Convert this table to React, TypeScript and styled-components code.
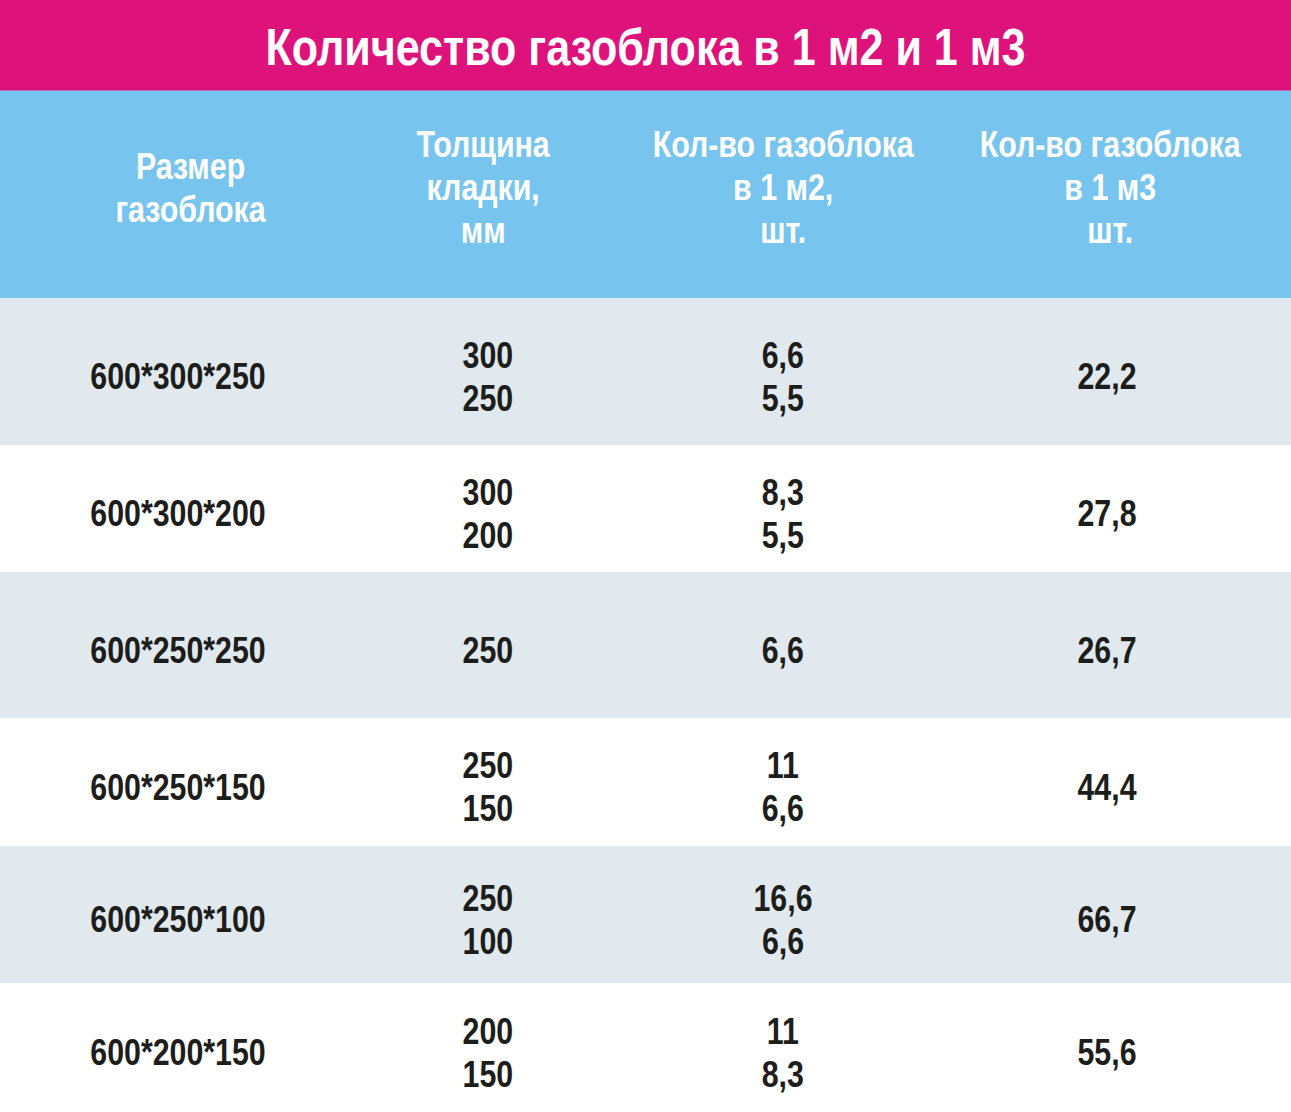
import React from "react";
import styled, { createGlobalStyle } from "styled-components";

const GlobalStyle = createGlobalStyle`
  html, body {
    margin: 0;
    padding: 0;
    background: #ffffff;
  }
  body {
    font-family: "Liberation Sans", Arial, sans-serif;
    font-weight: 700;
  }
`;

const rows = [
  { size: "600*300*250", thick: ["300", "250"], m2: ["6,6", "5,5"], m3: "22,2", h: 147, shaded: true },
  { size: "600*300*200", thick: ["300", "200"], m2: ["8,3", "5,5"], m3: "27,8", h: 127, shaded: false },
  { size: "600*250*250", thick: ["250"], m2: ["6,6"], m3: "26,7", h: 146, shaded: true },
  { size: "600*250*150", thick: ["250", "150"], m2: ["11", "6,6"], m3: "44,4", h: 128, shaded: false },
  { size: "600*250*100", thick: ["250", "100"], m2: ["16,6", "6,6"], m3: "66,7", h: 137, shaded: true },
  { size: "600*200*150", thick: ["200", "150"], m2: ["11", "8,3"], m3: "55,6", h: 129, shaded: false },
];

export default function App() {
  return (
    <>
      <GlobalStyle />
      <Table>
        <TitleBar>
          <Narrow>Количество газоблока в 1 м2 и 1 м3</Narrow>
        </TitleBar>
        <HeaderRow>
          <HeadCell $shift={26}>
            <Narrow>
              Размер
              <br />
              газоблока
            </Narrow>
          </HeadCell>
          <HeadCell $shift={-10}>
            <Narrow>
              Толщина
              <br />
              кладки,
              <br />
              мм
            </Narrow>
          </HeadCell>
          <HeadCell>
            <Narrow>
              Кол-во газоблока
              <br />в 1 м2,
              <br />
              шт.
            </Narrow>
          </HeadCell>
          <HeadCell $shift={-16}>
            <Narrow>
              Кол-во газоблока
              <br />в 1 м3
              <br />
              шт.
            </Narrow>
          </HeadCell>
        </HeaderRow>
        {rows.map((r) => (
          <BodyRow key={r.size} $shaded={r.shaded} $height={r.h}>
            <Cell>
              <Narrow>{r.size}</Narrow>
            </Cell>
            <Cell>
              <Narrow>
                {r.thick.map((t) => (
                  <Line key={t}>{t}</Line>
                ))}
              </Narrow>
            </Cell>
            <Cell>
              <Narrow>
                {r.m2.map((t) => (
                  <Line key={t}>{t}</Line>
                ))}
              </Narrow>
            </Cell>
            <Cell $shift={-22}>
              <Narrow>{r.m3}</Narrow>
            </Cell>
          </BodyRow>
        ))}
      </Table>
    </>
  );
}

const Table = styled.div`
  width: 1291px;
  display: flex;
  flex-direction: column;
`;

// Arial Narrow is not installed: squeeze Liberation Sans to its width
const Narrow = styled.span`
  display: inline-block;
  transform: scaleX(0.82);
  white-space: nowrap;
`;

const TitleBar = styled.div`
  height: 90px;
  background: #dd137b;
  color: #ffffff;
  font-size: 52.5px;
  display: flex;
  align-items: center;
  justify-content: center;
  padding-top: 2px;
  box-sizing: border-box;
`;

const Columns = styled.div`
  display: grid;
  grid-template-columns: 356px 264px 326px 1fr;
`;

const HeaderRow = styled(Columns)`
  height: 208px;
  background: #77c4ef;
  color: #ffffff;
  border-top: 1px solid #b766b8;
  box-sizing: border-box;
`;

const HeadCell = styled.div<{ $shift?: number }>`
  display: flex;
  flex-direction: column;
  align-items: center;
  justify-content: center;
  text-align: center;
  font-size: 37px;
  line-height: 43px;
  padding-bottom: 14px;
  padding-left: ${(p) => Math.max(p.$shift ?? 0, 0)}px;
  padding-right: ${(p) => Math.max(-(p.$shift ?? 0), 0)}px;
`;

const BodyRow = styled(Columns)<{ $shaded: boolean; $height: number }>`
  height: ${(p) => p.$height}px;
  background: ${(p) => (p.$shaded ? "#e1e9ef" : "#ffffff")};
  color: #1d1d1b;
`;

const Cell = styled.div<{ $shift?: number }>`
  display: flex;
  flex-direction: column;
  align-items: center;
  justify-content: center;
  text-align: center;
  font-size: 37px;
  line-height: 43px;
  padding-top: 10px;
  padding-right: ${(p) => Math.max(-(p.$shift ?? 0), 0)}px;
`;

const Line = styled.div`
  display: block;
`;
